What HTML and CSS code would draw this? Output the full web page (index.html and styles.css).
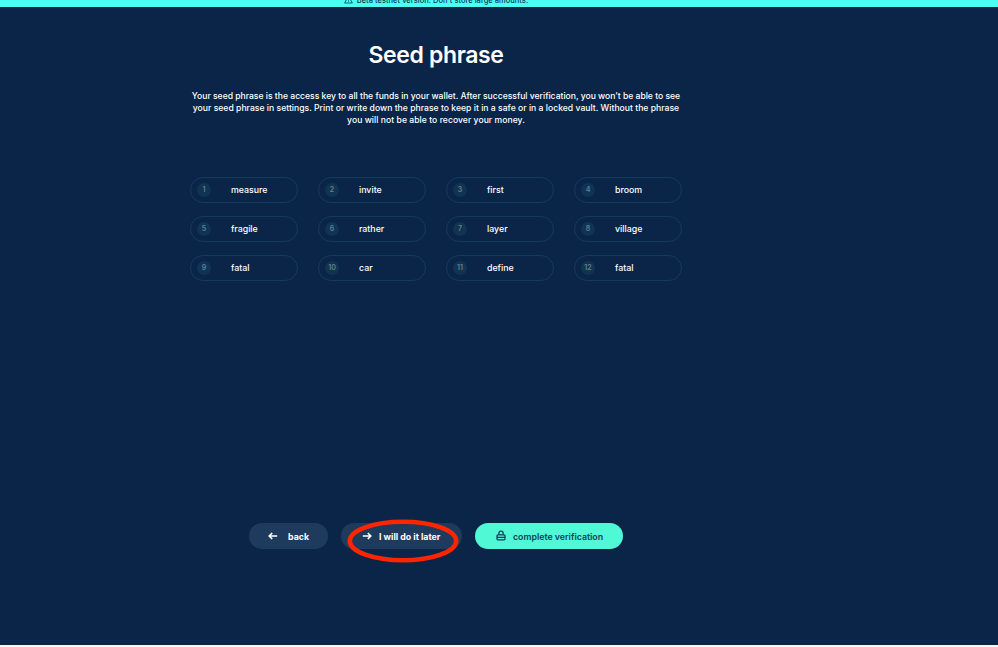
FILE: index.html
```html
<!DOCTYPE html>
<html lang="en">
<head>
<meta charset="utf-8">
<title>Seed phrase</title>
<link rel="stylesheet" href="styles.css">
</head>
<body>
<div class="page">
  <header class="banner">
    <svg class="warn" viewBox="0 0 10 9"><path d="M5 .8 9.3 8.4H.7Z M5 3.4v2.4M5 6.6v.8"/></svg>
    <span>Beta testnet version. Don't store large amounts.</span>
  </header>
  <main class="content">
    <h1><span>Seed phrase</span></h1>
    <p class="intro">
      <span class="l1">Your seed phrase is the access key to all the funds in your wallet. After successful verification, you won’t be able to see</span>
      <span class="l2">your seed phrase in settings. Print or write down the phrase to keep it in a safe or in a locked vault. Without the phrase</span>
      <span class="l3">you will not be able to recover your money.</span>
    </p>
    <ol class="words">
      <li><b>1</b><span>measure</span></li>
      <li><b>2</b><span>invite</span></li>
      <li><b>3</b><span>first</span></li>
      <li><b>4</b><span>broom</span></li>
      <li><b>5</b><span>fragile</span></li>
      <li><b>6</b><span>rather</span></li>
      <li><b>7</b><span>layer</span></li>
      <li><b>8</b><span>village</span></li>
      <li><b>9</b><span>fatal</span></li>
      <li><b>10</b><span>car</span></li>
      <li><b>11</b><span>define</span></li>
      <li><b>12</b><span>fatal</span></li>
    </ol>
    <div class="actions">
      <button class="btn back"><svg class="arrow" viewBox="0 0 10 8"><path d="M9.2 4H1.2M4.2 1 1.2 4l3 3"/></svg><span>back</span></button>
      <button class="btn later"><svg class="arrow" viewBox="0 0 10 8"><path d="M.8 4h8M5.8 1l3 3-3 3"/></svg><span>I will do it later</span>
        <svg class="ring" viewBox="0 0 114 46"><ellipse cx="57" cy="23" rx="53.2" ry="19.2"/></svg>
      </button>
      <button class="btn complete"><svg class="lock" viewBox="0 0 10 11"><path d="M2.9 4.8V3.2a2.1 2.1 0 0 1 4.2 0v1.6M2 4.8h6q1 0 1 1v3q0 1-1 1H2q-1 0-1-1v-3q0-1 1-1ZM1 7.3h8"/></svg><span>complete verification</span></button>
    </div>
  </main>
</div>
</body>
</html>
```

FILE: styles.css
```css
* { box-sizing: border-box; }
body {
  margin: 0;
  height: 647px;
  overflow: hidden;
  background: #f4f6f8;
  font-family: Inter, "Liberation Sans", sans-serif;
  color: #fff;
}
.page { height: 645px; background: #0b2548; overflow: hidden; }
.banner {
  height: 7px;
  width: 100%;
  padding-right: 126px;
  display: flex;
  align-items: flex-end;
  justify-content: center;
  gap: 4px;
  overflow: hidden;
  background: #4dfff3;
  color: #0b3a55;
  font-size: 7.5px;
  font-weight: 500;
  line-height: 10px;
  white-space: nowrap;
}
.banner span { letter-spacing: 0.02px; margin-bottom: 1.5px; }
.warn { width: 9px; height: 9px; flex: none; margin-bottom: 3px; fill: none; stroke: #0b3a55; stroke-width: .9; }
.content {
  width: 492px;
  margin-left: 190px;
  display: flex;
  flex-direction: column;
  align-items: center;
}
h1 {
  margin: 33px 0 0;
  font-size: 23px;
  font-weight: 600;
  letter-spacing: -0.36px;
  line-height: 30px;
  white-space: nowrap;
}
.intro {
  margin: 20px 0 0;
  font-size: 8.6px;
  font-weight: 500;
  line-height: 12px;
  text-align: center;
  white-space: nowrap;
}
.intro span { display: block; }
.l1 { letter-spacing: -0.01px; }
.l2 { letter-spacing: 0.02px; }
.l3 { letter-spacing: 0.04px; }
.words {
  list-style: none;
  width: 492px;
  margin: 51px 0 0;
  padding: 0;
  display: grid;
  grid-template-columns: repeat(4, 108px);
  justify-content: space-between;
  row-gap: 13.2px;
}
.words li {
  height: 26px;
  padding-left: 6px;
  display: flex;
  align-items: center;
  border: 1px solid #133c58;
  border-radius: 13px;
  font-size: 8.8px;
  font-weight: 500;
}
.words b {
  width: 14px;
  height: 14px;
  flex: none;
  margin-right: 20px;
  border-radius: 50%;
  background: #103451;
  color: #687f94;
  font-size: 7px;
  font-weight: 600;
  line-height: 14px;
  text-align: center;
}
.words span { margin-top: -1px; }
.actions {
  width: 374px;
  margin-top: 241.6px;
  display: flex;
  gap: 13px;
}
.btn {
  position: relative;
  height: 26px;
  padding: 0;
  display: flex;
  align-items: center;
  border: 0;
  border-radius: 13px;
  background: #1e3a5c;
  color: #fff;
  font: 700 8.8px Inter, "Liberation Sans", sans-serif;
  white-space: nowrap;
}
.btn > span { margin-top: 1px; }
.back { width: 79px; padding-left: 19px; gap: 10px; }
.later { width: 121px; padding-left: 21px; gap: 7px; }
.complete { width: 148px; padding-left: 21px; gap: 7px; background: #50f8d5; color: #0e4259; font-weight: 600; }
.arrow { width: 10px; height: 8px; flex: none; fill: none; stroke: #fff; stroke-width: 1.6; }
.lock { width: 10px; height: 11px; flex: none; fill: none; stroke: #0e4259; stroke-width: 1.3; }
.ring { position: absolute; left: 5px; top: -5px; width: 114px; height: 46px; fill: none; stroke: #fb2500; stroke-width: 4.6; }
```
